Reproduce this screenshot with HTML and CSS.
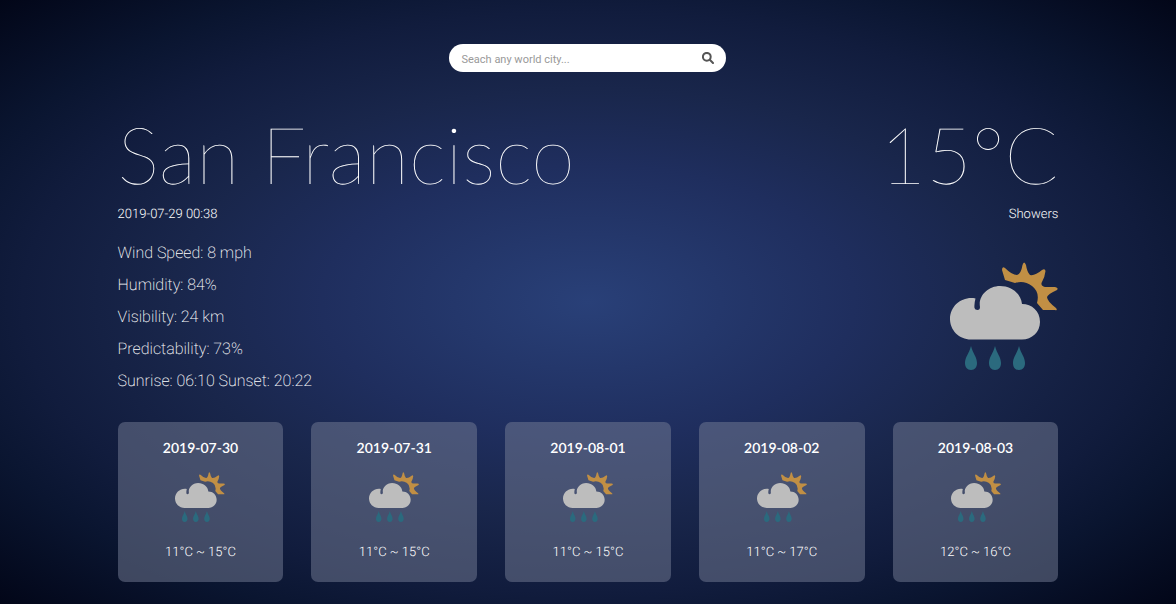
FILE: index.html
```html
<!DOCTYPE html>
<html lang="en">
<head>
<meta charset="utf-8">
<meta name="viewport" content="width=device-width, initial-scale=1">
<title>Weather</title>
<link rel="stylesheet" href="styles.css">
</head>
<body>
<svg class="sprite" aria-hidden="true">
  <symbol id="showers" viewBox="0 0 108 108">
    <path fill="#c18f44" d="M55 18L52 8Q52 4 55 6Q62 13 67 13Q71 12 72.500 3Q74 -2 76 3Q77 10 80 13Q85 14 92 8Q95 6 95.500 9Q95 15 91.500 21Q91 24 95 25L105 25Q109 26 107 28Q98 32 97 35Q97 39 106 46Q108 49 105 48H93L87 41Q90 30 82 24Q74 18 65 21Z"/>
    <path fill="#bdbdbd" d="M21 77.500C9 77.500 0 68 0 57C0 44 12 34 25.500 36.500Q24 42 24.500 46Q25 48 27.500 48Q30 48 30 45C28 34 38 24 50 24C62 24 71 32 72 42C82 42 90 49 90 60C90 70 82 77.500 72 77.500Z"/>
    <path fill="#2b6a7e" d="M21 84C19 92 15 95 15 101C15 105 17 108 21 108S27 105 27 101C27 95 23 92 21 84ZM45 84C43 92 39 95 39 101C39 105 41 108 45 108S51 105 51 101C51 95 47 92 45 84ZM69 84C67 92 63 95 63 101C63 105 65 108 69 108S75 105 75 101C75 95 71 92 69 84Z"/>
  </symbol>
</svg>
<main class="page">
  <form class="search" role="search">
    <input class="search-input" type="text" aria-label="City" placeholder="Seach any world city...">
    <button class="search-button" type="button" aria-label="Search">
      <svg class="search-icon" viewBox="0 0 12 12"><circle cx="4.800" cy="4.800" r="3.900"/><path d="M7.800 7.800L11 11"/></svg>
    </button>
  </form>
  <section class="current">
    <div class="details">
      <h1 class="headline">San Francisco</h1>
      <p class="caption">2019-07-29 00:38</p>
      <ul class="stats">
        <li>Wind Speed: 8 mph</li>
        <li>Humidity: 84%</li>
        <li>Visibility: 24 km</li>
        <li>Predictability: 73%</li>
        <li>Sunrise: 06:10 Sunset: 20:22</li>
      </ul>
    </div>
    <div class="conditions">
      <p class="headline">15°C</p>
      <p class="caption">Showers</p>
      <svg class="icon-large" role="img" aria-label="Showers"><use href="#showers"/></svg>
    </div>
  </section>
  <section class="forecast">
    <article class="card"><h2 class="day">2019-07-30</h2><svg class="icon-small" role="img" aria-label="Showers"><use href="#showers"/></svg><p class="range">11°C ~ 15°C</p></article>
    <article class="card"><h2 class="day">2019-07-31</h2><svg class="icon-small" role="img" aria-label="Showers"><use href="#showers"/></svg><p class="range">11°C ~ 15°C</p></article>
    <article class="card"><h2 class="day">2019-08-01</h2><svg class="icon-small" role="img" aria-label="Showers"><use href="#showers"/></svg><p class="range">11°C ~ 15°C</p></article>
    <article class="card"><h2 class="day">2019-08-02</h2><svg class="icon-small" role="img" aria-label="Showers"><use href="#showers"/></svg><p class="range">11°C ~ 17°C</p></article>
    <article class="card"><h2 class="day">2019-08-03</h2><svg class="icon-small" role="img" aria-label="Showers"><use href="#showers"/></svg><p class="range">12°C ~ 16°C</p></article>
  </section>
</main>
</body>
</html>
```
FILE: styles.css
```css
* { box-sizing: border-box; margin: 0; padding: 0; }
body {
  min-height: 100vh;
  background: radial-gradient(ellipse farthest-corner, #294078 0%, #1f2e5e 32%, #19264b 50%, #111c3d 68%, #0a1530 80%, #020618 100%);
  color: #fff;
  font-family: Roboto, "Liberation Sans", sans-serif;
  font-weight: 300;
  text-rendering: geometricPrecision;
}
.sprite { display: none; }
.page { width: 80%; margin: 0 auto; padding: 44px 0 22px; }
.search {
  display: flex;
  align-items: center;
  width: 277px;
  height: 28px;
  margin: 0 auto;
  padding: 0 12px;
  border-radius: 14px;
  background: #fff;
}
.search-input { flex: 1; min-width: 0; padding-top: 2px; border: 0; outline: 0; background: none; font: 400 11px Roboto, sans-serif; color: #444; }
.search-input::placeholder { color: #999; opacity: 1; }
.search-button { display: flex; border: 0; background: none; cursor: pointer; }
.search-icon { width: 12px; height: 12px; fill: none; stroke: #555; stroke-width: 2; stroke-linecap: round; }
.current { display: flex; justify-content: space-between; margin-top: 34px; }
.conditions { display: flex; flex-direction: column; align-items: flex-end; }
.headline { margin-bottom: 3px; font: 200 79px/96px Lato, sans-serif; }
.caption { font-size: 13px; line-height: 20px; }
.stats { list-style: none; margin-top: 12px; font-size: 16px; font-weight: 200; line-height: 32px; }
.icon-large { width: 108px; height: 108px; margin-top: 37px; }
.forecast { display: grid; grid-template-columns: repeat(5, 1fr); gap: 28px; margin-top: 25px; }
.card {
  display: flex;
  flex-direction: column;
  align-items: center;
  padding: 17px 0 19px;
  border-radius: 7px;
  background: rgba(118, 126, 150, 0.5);
}
.day { font: 600 14px/18px Lato, sans-serif; }
.icon-small { width: 50px; height: 50px; margin-top: 15px; }
.range { margin-top: 21px; font-size: 13px; line-height: 20px; }
```
